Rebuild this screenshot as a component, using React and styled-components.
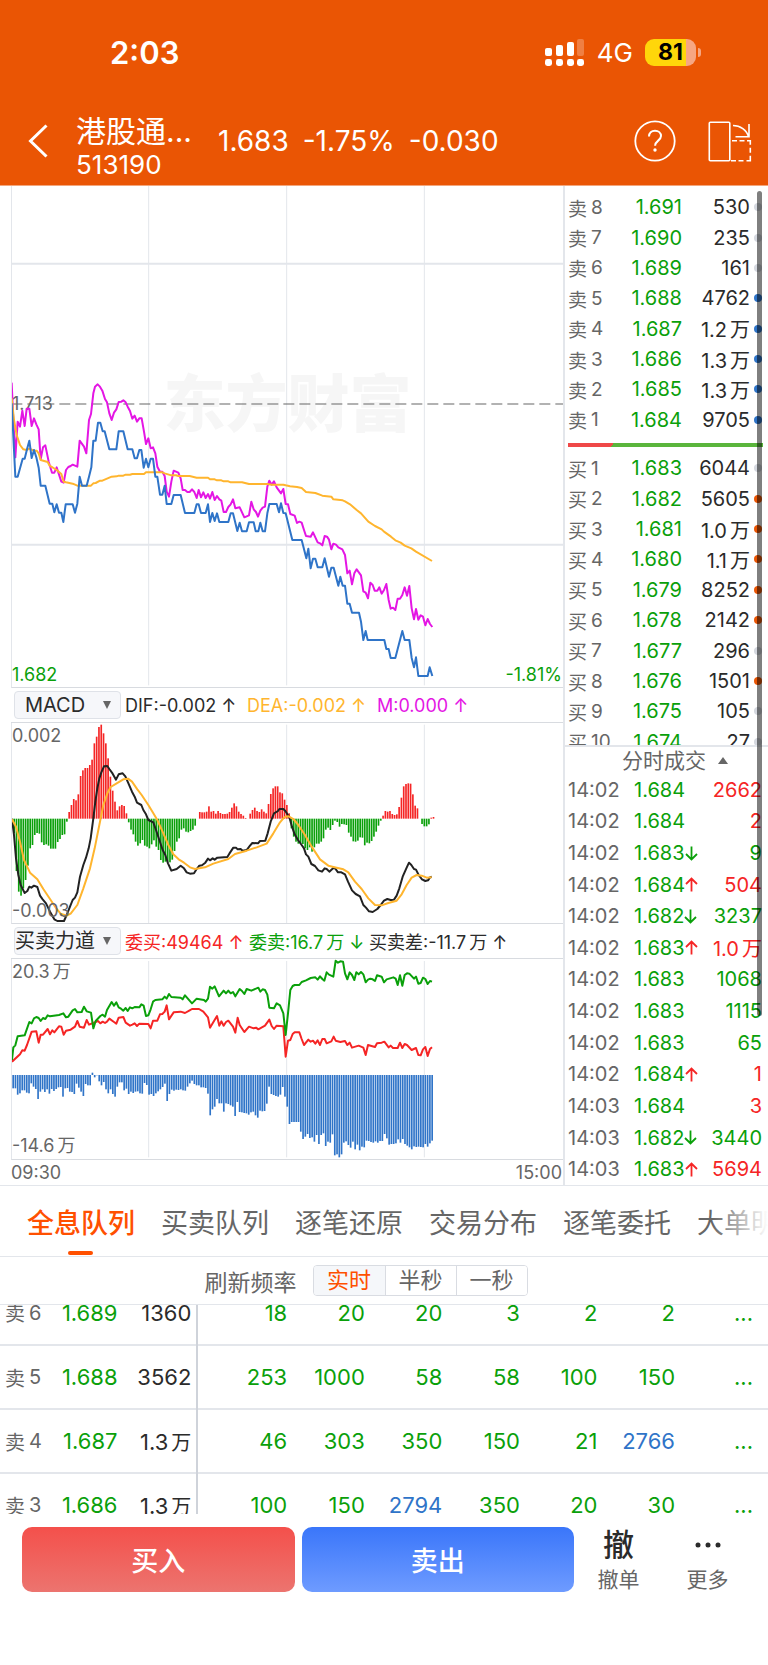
import React from "react";
import styled, { createGlobalStyle, css } from "styled-components";

const c = {
  brand: "#ea5504",
  accent: "#ff5000",
  up: "#f52525",
  down: "#0aa00a",
  blue: "#2f74c8",
  line: "#e3e6eb",
  text: "#2b2b2b",
  muted: "#666666",
  gold: "#ffb52e",
  pink: "#e416e4",
};

const Global = createGlobalStyle`
  * { box-sizing: border-box; }
  body { margin: 0; background: #fff; color: ${c.text};
    font-family: Inter, "Noto Sans CJK SC", sans-serif; }
  button, select { font: inherit; color: inherit; margin: 0; padding: 0; border: 0; background: none; cursor: pointer; }
`;

/* ---------- header ---------- */
const Header = styled.header`
  background: ${c.brand};
  color: #fff;
  height: 186px;
  border-bottom: 1px solid #f3a67c;
`;
const StatusBar = styled.div`
  display: flex;
  align-items: center;
  height: 103px;
  padding: 2px 67px 0 110px;
`;
const Clock = styled.span`
  flex: 1;
  font-size: 31px;
  font-weight: 600;
`;
const Network = styled.span`
  font-size: 26px;
  margin: 0 12px;
`;
const Battery = styled.span`
  display: flex;
  align-items: center;
  gap: 2px;
`;
const BatteryBody = styled.span`
  width: 51px;
  height: 27px;
  border-radius: 9px;
  background: linear-gradient(90deg, #ffd60a 81%, #f6a683 81%);
  color: #000;
  font-size: 23px;
  font-weight: 700;
  line-height: 27px;
  text-align: center;
`;
const BatteryTip = styled.span`
  width: 3px;
  height: 9px;
  border-radius: 0 3px 3px 0;
  background: #f6a683;
`;
const TitleBar = styled.div`
  display: flex;
  align-items: center;
  height: 76px;
  padding: 0 16px 0 28px;
`;
const IconButton = styled.button`
  display: flex;
  color: #fff;
`;
const TitleBlock = styled.h1`
  width: 142px;
  margin: 0 0 0 28px;
  padding-top: 12px;
  font-weight: 400;
`;
const FundName = styled.span`
  display: block;
  font-size: 30px;
  line-height: 36px;
`;
const FundCode = styled.span`
  display: block;
  font-size: 26px;
  line-height: 32px;
`;
const Quote = styled.div`
  flex: 1;
  display: flex;
  gap: 14px;
  font-size: 28px;
`;
const HeaderTools = styled.div`
  display: flex;
  align-items: center;
  gap: 32px;
`;

/* ---------- market area ---------- */
const Market = styled.main`
  display: grid;
  grid-template-columns: minmax(0, 1fr) 205px;
  border-bottom: 1px solid ${c.line};
`;
const Charts = styled.section`
  padding-left: 11px;
`;
const Panel = styled.div`
  position: relative;
  height: ${(p) => p.$height}px;
  border-left: 1px solid ${c.line};
  border-bottom: 1px solid #d8dbe0;
  overflow: hidden;
`;
const Plot = styled.svg`
  position: relative;
  display: block;
  width: 100%;
  height: 100%;
  path { vector-effect: non-scaling-stroke; fill: none; stroke-linejoin: round; }
`;
const AxisText = styled.span`
  position: absolute;
  left: 0;
  font-size: 18px;
  line-height: 20px;
  color: ${(p) => p.$color || c.muted};
  ${(p) => p.$right && css`left: auto; right: 1px;`}
  ${(p) => (p.$bottom !== undefined ? `bottom: ${p.$bottom}px;` : `top: ${p.$top}px;`)}
`;
const Watermark = styled.span`
  position: absolute;
  left: 0;
  right: 0;
  top: 174px;
  text-align: center;
  font-size: 62px;
  font-weight: 900;
  line-height: 90px;
  color: #f6f6f6;
`;
const Legend = styled.div`
  display: flex;
  align-items: center;
  height: 35px;
  border-bottom: 1px solid #d8dbe0;
  padding-left: 3px;
  font-size: 18px;
  white-space: nowrap;
`;
const SelectWrap = styled.span`
  position: relative;
  width: 107px;
  height: 28px;
  margin-right: 4px;
  svg { position: absolute; right: 9px; top: 9px; pointer-events: none; }
`;
const Select = styled.select`
  appearance: none;
  display: block;
  width: 107px;
  height: 28px;
  padding-right: 25px;
  border: 1px solid #dfe2e8;
  border-radius: 4px;
  background: #f6f7fa;
  font-size: 20px;
  line-height: 26px;
  text-align: center;
  text-align-last: center;
`;
const LegendItem = styled.span`
  color: ${(p) => p.$color};
  min-width: ${(p) => p.$min}px;
`;
const TimeAxis = styled.div`
  display: flex;
  justify-content: space-between;
  align-items: center;
  height: 25px;
  padding-right: 1px;
  font-size: 18px;
  color: ${c.muted};
`;

/* ---------- right column ---------- */
const Side = styled.aside`
  position: relative;
  display: flex;
  flex-direction: column;
  border-left: 2px solid ${c.line};
`;
const Book = styled.div`
  height: 561px;
  padding-top: 6px;
  overflow: hidden;
  border-bottom: 2px solid ${c.line};
`;
const Levels = styled.div`
  display: flex;
  flex-direction: column;
  height: ${(p) => p.$height}px;
`;
const Level = styled.div`
  flex: 1;
  display: grid;
  grid-template-columns: 50px 1fr 68px 12px;
  align-items: center;
  padding: 0 6px 0 3px;
  font-size: 20px;
  text-align: right;
`;
const SideLabel = styled.span`
  display: flex;
  align-items: center;
  gap: 4px;
  font-size: 19px;
  color: ${c.muted};
`;
const Price = styled.span`
  color: ${c.down};
`;
const Unit = styled.span`
  margin-left: 3px;
`;
const Dot = styled.i`
  justify-self: end;
  width: 8px;
  height: 8px;
  border-radius: 50%;
  background: ${(p) => p.$color};
`;
const Ratio = styled.div`
  height: 4px;
  margin: 8px 5px 6px 3px;
  background: linear-gradient(120deg, #ef4848 23%, #5ab53c 23%);
`;
const TicksToggle = styled.button`
  display: flex;
  align-items: center;
  justify-content: center;
  gap: 12px;
  height: 27px;
  padding-left: 17px;
  font-size: 21px;
  line-height: 27px;
  color: ${c.muted};
`;
const Ticks = styled.div`
  flex: 1;
  display: grid;
  grid-auto-rows: 1fr;
`;
const Tick = styled.div`
  display: grid;
  grid-template-columns: 66px auto 1fr;
  align-items: center;
  padding: 0 6px 0 3px;
  font-size: 20px;
`;
const TickTime = styled.span`
  color: ${c.muted};
`;
const TickPrice = styled.span`
  display: flex;
  align-items: center;
  color: ${c.down};
`;
const Volume = styled.span`
  text-align: right;
  color: ${(p) => (p.$up ? c.up : c.down)};
`;
const ScrollThumb = styled.div`
  position: absolute;
  right: 6px;
  top: 5px;
  width: 5px;
  height: 825px;
  border-radius: 3px;
  background: rgba(0, 0, 0, 0.5);
`;

/* ---------- tabs & refresh ---------- */
const Tabs = styled.nav`
  position: relative;
  display: flex;
  gap: 26px;
  height: 71px;
  padding-left: 27px;
  overflow: hidden;
  border-bottom: 1px solid ${c.line};
  &::after {
    content: "";
    position: absolute;
    right: 0;
    top: 0;
    bottom: 0;
    width: 56px;
    background: linear-gradient(90deg, rgba(255, 255, 255, 0), #fff);
  }
`;
const Tab = styled.button`
  position: relative;
  flex: none;
  font-size: 27px;
  color: ${(p) => (p.$active ? c.accent : c.muted)};
  font-weight: ${(p) => (p.$active ? 500 : 400)};
  ${(p) => p.$active && css`
    &::after {
      content: "";
      position: absolute;
      left: 41px;
      bottom: 1px;
      width: 25px;
      height: 4px;
      border-radius: 2px;
      background: ${c.accent};
    }
  `}
`;
const Refresh = styled.div`
  display: flex;
  align-items: center;
  justify-content: center;
  gap: 16px;
  height: 48px;
  padding-right: 36px;
  border-bottom: 1px solid ${c.line};
  font-size: 23px;
  color: ${c.muted};
`;
const Segments = styled.div`
  display: flex;
  height: 31px;
  border: 1px solid #d9dce2;
  border-radius: 4px;
  overflow: hidden;
`;
const Segment = styled.button`
  width: 71px;
  font-size: 22px;
  line-height: 29px;
  color: ${(p) => (p.$active ? c.accent : c.muted)};
  background: ${(p) => (p.$active ? "#f5f7fa" : "#fff")};
  & + & { border-left: 1px solid #d9dce2; }
`;

/* ---------- queue table ---------- */
const QueueView = styled.div`
  height: 209px;
  overflow: hidden;
`;
const Queue = styled.table`
  width: 100%;
  margin-top: -24px;
  table-layout: fixed;
  border-collapse: collapse;
  font-size: 22px;
  text-align: right;
`;
const QueueRow = styled.tr`
  height: 64px;
  border-bottom: 2px solid ${c.line};
`;
const Cell = styled.td`
  padding: 0;
  color: ${(p) => p.$color || c.down};
`;
const TotalCell = styled(Cell)`
  padding-right: 5px;
  border-right: 2px solid #cfd3da;
  ${Unit} { font-size: 20px; }
`;
const MoreCell = styled(Cell)`
  padding-right: 15px;
`;
const RowHead = styled.th`
  padding: 0 0 0 5px;
  font-weight: 400;
  ${SideLabel} { font-size: 20px; }
`;

/* ---------- actions ---------- */
const Actions = styled.footer`
  display: flex;
  align-items: stretch;
  height: 78px;
  margin-bottom: 73px;
  padding: 13px 16px 0 22px;
`;
const TradeButton = styled.button`
  flex: 1;
  border-radius: 10px;
  color: #fff;
  font-size: 27px;
  font-weight: 500;
  background: ${(p) => p.$bg};
  & + & { margin-left: 7px; }
`;
const ActionLink = styled.button`
  width: 89px;
  font-size: 21px;
  color: ${c.muted};
  display: flex;
  flex-direction: column;
  align-items: center;
  line-height: 24px;
`;
const ActionGlyph = styled.span`
  display: flex;
  align-items: center;
  height: 38px;
  margin-bottom: 5px;
  font-size: 31px;
  font-weight: 500;
  color: ${c.text};
`;

/* ---------- series data ---------- */
const priceAM = "35,100 46,320 53,320 68,266 74,266 81,238 88,212 95,264 102,240 109,262 116,293 122,347 136,347 149,401 157,401 163,427 170,403 177,428 184,428 190,456 197,403 218,403 225,428 232,401 239,320 246,347 260,347 267,320 274,292 280,212 287,212 294,158 301,158 308,184 314,184 328,238 349,238 356,184 370,184 383,238 397,238 404,265 411,265 418,240 424,240 431,293 438,266 445,292 452,266 459,266 466,320 472,320 480,374 487,374 494,347 500,402 514,402 521,375 542,375 555,429 583,429 590,403 596,403 603,429 617,429 624,403 630,456 637,429 644,453 651,430 658,456 685,456 692,430 699,430 712,483 719,458 726,484 740,484 747,457 761,457 767,484 775,484 781,458 788,484 795,484 802,430 808,402 830,402 837,427 843,400 850,429";
const pricePM = "47,430 67,510 95,510 109,565 115,536 122,595 129,566 136,566 143,592 157,592 164,565 177,620 184,593 191,593 205,647 211,620 218,647 225,647 232,701 239,701 246,728 267,728 273,755 280,810 287,783 293,810 343,810 349,837 356,837 362,864 376,864 397,783 404,810 418,810 425,864 432,892 438,862 445,918 473,918 479,892 487,918";
const refAM = "35,38 40,150 46,262 53,155 60,170 67,122 74,168 80,116 88,116 95,168 102,145 109,163 116,178 122,268 129,232 136,226 146,275 156,308 163,308 170,292 184,335 191,338 198,300 205,291 212,288 218,284 232,290 239,212 252,230 259,250 267,150 273,132 280,70 285,50 293,43 299,49 307,62 315,87 321,97 328,130 335,150 342,128 349,118 356,96 364,95 370,91 377,97 383,110 390,123 397,146 404,137 411,155 418,145 425,145 432,185 438,222 445,205 452,235 459,232 466,250 472,290 480,305 487,305 494,318 500,365 507,380 514,335 521,302 535,308 542,325 548,360 555,360 562,366 569,366 576,358 583,366 590,384 596,360 603,382 610,367 617,384 624,372 630,386 637,366 644,390 651,378 658,388 664,392 671,426 678,426 685,411 692,403 699,388 706,415 719,412 733,442 747,436 754,395 761,418 768,426 774,440 781,422 788,413 795,410 802,350 808,332 815,344 822,334 830,352 843,370 850,357 857,402";
const refPM = "54,403 61,432 74,437 81,459 88,455 95,458 102,480 108,498 122,500 129,487 143,517 150,520 157,526 164,498 171,500 177,509 184,538 190,521 198,524 205,532 217,538 225,555 232,610 239,602 246,643 253,610 260,598 273,616 280,664 287,668 294,685 301,638 308,645 314,662 322,662 328,652 335,671 342,660 349,642 356,690 362,716 369,713 376,720 383,686 390,686 397,675 404,652 411,677 418,648 425,715 432,748 438,717 445,749 452,736 459,740 466,766 473,747 480,762 487,771";
const avgAM = "35,85 42,150 50,195 60,225 70,238 80,240 88,236 102,242 110,242 116,250 122,270 143,276 149,287 170,300 184,312 191,335 198,337 218,341 232,347 273,347 280,340 287,339 300,332 307,332 335,320 350,319 356,317 370,317 377,314 390,314 397,312 432,312 438,307 487,307 494,310 514,316 528,316 535,318 569,318 590,323 624,323 630,328 644,328 651,331 664,331 671,334 685,334 692,337 726,337 747,342 802,342 815,344 850,344";
const avgPM = "47,346 60,349 81,351 95,354 108,366 136,369 157,377 184,380 190,388 218,391 225,394 240,403 260,420 273,430 295,455 315,468 335,478 342,485 363,500 376,511 392,518 404,527 424,535 438,545 486,573";
const difAM = "36,401 42,450 48,520 55,570 62,600 74,624 82,618 88,605 94,608 102,602 112,606 120,632 128,643 138,655 150,680 163,703 172,708 192,708 200,690 210,665 218,645 225,638 232,622 240,575 250,540 258,518 266,490 272,460 280,400 286,350 292,310 298,280 304,262 312,244 322,243 328,252 338,266 348,284 356,268 368,265 376,274 384,292 396,320 404,335 411,353 424,360 430,375 438,388 445,405 460,412 468,435 478,465 488,495 496,510 504,535 514,557 530,552 542,542 552,550 560,562 570,566 582,565 590,552 598,542 606,541 616,533 624,521 630,526 638,520 644,524 652,518 682,516 688,506 700,488 708,488 713,493 722,492 728,497 740,495 750,482 757,474 774,475 780,468 796,467 803,445 812,410 822,385 834,378 838,372 850,372 856,378";
const difPM = "58,397 66,425 74,448 84,465 95,480 102,490 108,508 115,515 124,537 135,543 145,556 156,560 164,550 170,552 178,560 190,549 196,551 204,562 214,562 225,568 234,590 246,616 257,627 270,634 280,660 288,668 297,679 308,681 322,672 332,660 342,647 352,642 362,645 372,644 380,632 388,610 398,575 410,548 417,533 424,540 432,552 438,554 446,570 456,583 466,588 474,586 480,577 485,575";
const deaAM = "36,403 48,425 60,470 72,525 90,563 112,583 130,612 150,642 170,672 182,686 200,692 212,686 232,660 250,610 270,550 284,490 298,420 310,360 322,325 332,306 350,295 370,283 384,281 396,290 412,313 425,330 445,360 460,385 472,405 490,445 505,480 520,508 536,523 552,533 570,547 585,552 615,547 640,536 685,522 705,507 740,497 770,487 800,476 820,445 840,412 850,400";
const deaPM = "46,395 56,394 70,402 85,420 105,450 125,485 150,523 175,542 200,548 220,553 235,562 255,590 275,612 295,640 315,660 335,661 355,654 380,647 395,628 410,600 425,578 440,570 455,572 470,578 485,577";
const sellAM = "36,420 40,382 46,376 53,349 74,346 88,306 95,310 102,295 109,291 116,294 122,303 129,294 136,297 143,286 150,289 177,285 190,280 198,292 205,290 218,271 225,267 232,277 245,276 252,260 260,274 273,278 280,325 287,303 301,288 308,284 315,290 321,270 335,246 342,257 349,247 356,262 363,266 370,272 377,264 383,273 390,262 397,265 404,261 418,262 424,253 431,257 438,288 445,286 452,268 459,245 466,240 487,238 494,230 500,236 507,222 514,231 542,233 548,238 555,226 576,250 590,236 612,240 617,245 624,236 630,200 637,206 644,199 657,229 671,212 678,220 685,212 692,220 699,216 706,229 719,207 726,213 733,222 740,207 754,212 775,203 781,215 788,208 795,210 802,224 808,263 822,265 830,250 840,256 850,280";
const sellPM = "47,345 54,280 61,210 68,198 74,195 88,195 95,186 108,181 122,174 136,172 143,179 150,169 157,177 163,182 170,157 177,164 190,170 197,122 204,128 211,124 219,125 225,160 232,178 239,157 246,165 253,180 259,157 266,163 273,156 280,163 287,187 294,179 301,176 308,178 315,183 321,166 335,170 342,187 350,178 370,172 377,176 383,195 390,166 397,197 404,165 411,160 418,161 432,176 438,170 445,191 452,189 459,173 466,177 473,192 480,183 486,185";
const buyAM = "36,425 60,403 67,391 74,392 81,375 95,335 109,334 116,368 122,344 129,344 143,327 150,343 157,331 163,337 177,319 184,320 191,344 198,332 212,329 225,320 232,303 239,320 252,323 260,300 267,314 287,306 294,303 301,310 308,305 315,309 321,305 328,296 342,306 349,311 356,293 370,291 377,308 390,317 397,314 404,310 411,318 418,311 445,312 452,325 459,302 472,302 480,283 487,282 494,275 500,256 507,298 521,277 542,275 555,279 569,271 576,267 597,267 610,275 624,292 630,323 651,288 658,317 664,304 671,317 678,306 685,302 699,320 706,338 713,293 719,315 733,336 747,320 761,325 768,323 775,328 795,317 808,299 815,318 822,327 830,317 850,319";
const buyPM = "47,410 54,362 61,360 68,342 74,337 88,337 95,357 102,375 115,359 122,365 129,362 136,371 143,361 150,375 157,357 164,357 170,370 184,364 191,350 197,362 211,366 225,363 232,375 239,368 246,383 266,377 280,383 287,405 294,375 315,381 321,370 335,368 343,365 356,382 362,377 369,384 383,384 390,368 397,384 404,372 411,375 425,390 438,384 445,405 452,406 459,388 466,381 473,408 480,387 486,382";

const macdBars = [
  445, 558, 620, 632, 610, 585, 542, 490, 480, 450, 444, 446, 472, 480, 478, 482, 491, 491, 491, 471,
  462, 450, 448, 410, 381, 360, 342, 346, 328, 273, 256, 249, 249, 240, 224, 175, 155, 126, 119, 145,
  175, 220, 275, 317, 350, 376, 364, 360, 363, 385, 412, 434, 448, 470, 482, 475, 465, 482, 485, 490,
  478, 466, 485, 495, 525, 533, 530, 530, 532, 524, 498, 470, 460, 434, 430, 440, 442, 438, 434, 422,
  401, 381, 382, 382, 380, 364, 380, 378, 386, 378, 384, 387, 387, 386, 381, 368, 355, 364, 380, 387,
  392, 399, 401, 386, 375, 368, 378, 381, 373, 380, 385, 357, 327, 310, 304, 304, 322, 325, 344, 360,
  385, 430, 455, 470, 476, 475, 477, 490, 495, 487, 500, 487, 476, 476, 470, 460, 434, 428, 435, 420,
  407, 411, 425, 417, 418, 420, 443, 455, 469, 470, 467, 457, 458, 481, 473, 475, 468, 455, 440, 422,
  407, 392, 378, 380, 378, 387, 390, 388, 366, 338, 304, 297, 295, 296, 328, 362, 370, 401, 417, 424,
  424, 418, 398, 396,
];
const gapBars = [
  505, 505, 524, 520, 511, 511, 518, 520, 490, 500, 507, 537, 515, 508, 516, 508, 521, 507, 513, 507,
  502, 501, 530, 505, 504, 515, 516, 522, 491, 503, 515, 528, 492, 496, 496, 458, 472, 466, 484, 496,
  486, 508, 520, 508, 522, 530, 500, 487, 487, 511, 506, 522, 515, 519, 515, 514, 520, 521, 489, 495,
  524, 522, 528, 520, 514, 508, 501, 491, 543, 522, 509, 512, 509, 510, 508, 511, 512, 500, 490, 482,
  492, 496, 496, 502, 502, 504, 521, 586, 568, 560, 537, 550, 550, 575, 550, 552, 556, 560, 588, 546,
  576, 577, 579, 580, 584, 577, 575, 586, 593, 572, 574, 573, 551, 500, 522, 525, 528, 530, 524, 501,
  530, 560, 612, 606, 606, 606, 606, 635, 657, 650, 642, 654, 652, 665, 645, 672, 645, 640, 678, 665,
  668, 643, 706, 703, 712, 703, 668, 664, 675, 683, 665, 688, 674, 691, 680, 682, 662, 663, 666, 668,
  664, 668, 663, 663, 642, 655, 674, 672, 672, 670, 658, 668, 657, 672, 677, 682, 688, 679, 681, 680,
  681, 682, 672, 680, 670, 662,
];

const PM_OFFSET = 810;
const points = (s, dx = 0) =>
  s.split(" ").map((p) => {
    const [x, y] = p.split(",").map(Number);
    return `${x + dx},${y}`;
  });
const session = (am, pm) => "M" + [...points(am), ...points(pm, PM_OFFSET)].join("L");

const Line = ({ am, pm, color, width = 2 }) => (
  <path d={session(am, pm)} stroke={color} strokeWidth={width} />
);

const Grid = ({ top, bottom }) => (
  <>
    {[446, 860, 1273].map((x) => (
      <path key={x} d={`M${x},${top}V${bottom}`} stroke={c.line} strokeWidth={1} />
    ))}
  </>
);

const Bars = ({ values, zero, first, last, colorOf }) => {
  const step = (last - first) / (values.length - 1);
  return values.map((v, i) =>
    v === zero ? null : (
      <rect
        key={i}
        x={first + i * step - 3}
        y={Math.min(v, zero)}
        width={5}
        height={Math.abs(v - zero)}
        fill={colorOf(v)}
      />
    )
  );
};

const Indicator = ({ label, options, children }) => (
  <Legend>
    <SelectWrap>
      <Select aria-label={label} defaultValue={options[0]}>
        {options.map((o) => (
          <option key={o}>{o}</option>
        ))}
      </Select>
      <svg width="10" height="10" viewBox="0 0 10 10">
        <path d="M1 1h8L5 9z" fill="#666" />
      </svg>
    </SelectWrap>
    {children}
  </Legend>
);

const Amount = ({ value }) =>
  value.endsWith("万") ? (
    <>
      {value.slice(0, -1)}
      <Unit>万</Unit>
    </>
  ) : (
    value
  );

const grey = "#d5d8df";
const asks = [
  ["8", "1.691", "530", grey],
  ["7", "1.690", "235", grey],
  ["6", "1.689", "161", grey],
  ["5", "1.688", "4762", c.blue],
  ["4", "1.687", "1.2万", c.blue],
  ["3", "1.686", "1.3万", c.blue],
  ["2", "1.685", "1.3万", c.blue],
  ["1", "1.684", "9705", c.blue],
];
const bids = [
  ["1", "1.683", "6044", grey],
  ["2", "1.682", "5605", c.brand],
  ["3", "1.681", "1.0万", c.brand],
  ["4", "1.680", "1.1万", c.brand],
  ["5", "1.679", "8252", c.brand],
  ["6", "1.678", "2142", c.brand],
  ["7", "1.677", "296", grey],
  ["8", "1.676", "1501", c.brand],
  ["9", "1.675", "105", grey],
  ["10", "1.674", "27", grey],
];
const ticks = [
  ["14:02", "1.684", "", "2662", true],
  ["14:02", "1.684", "", "2", true],
  ["14:02", "1.683", "down", "9", false],
  ["14:02", "1.684", "up", "504", true],
  ["14:02", "1.682", "down", "3237", false],
  ["14:02", "1.683", "up", "1.0万", true],
  ["14:02", "1.683", "", "1068", false],
  ["14:02", "1.683", "", "1115", false],
  ["14:02", "1.683", "", "65", false],
  ["14:02", "1.684", "up", "1", true],
  ["14:03", "1.684", "", "3", true],
  ["14:03", "1.682", "down", "3440", false],
  ["14:03", "1.683", "up", "5694", true],
];
const queue = [
  ["6", "1.689", "1360", ["18", "20", "20", "3", "2", "2"]],
  ["5", "1.688", "3562", ["253", "1000", "58", "58", "100", "150"]],
  ["4", "1.687", "1.3万", ["46", "303", "350", "150", "21", "2766"]],
  ["3", "1.686", "1.3万", ["100", "150", "2794", "350", "20", "30"]],
];

const Arrow = ({ dir }) => (
  <svg width="13" height="15" viewBox="0 0 13 15" fill="none" stroke={dir === "up" ? c.up : c.down} strokeWidth="1.8">
    <path d={dir === "up" ? "M6.5 14.500V1.500M1 7l5.500-5.500L12 7" : "M6.5 .5v13M1 8l5.500 5.500L12 8"} />
  </svg>
);

const BookSide = ({ name, rows, height }) => (
  <Levels $height={height}>
    {rows.map(([n, price, qty, dot]) => (
      <Level key={n}>
        <SideLabel>
          <span>{name}</span>
          <span>{n}</span>
        </SideLabel>
        <Price>{price}</Price>
        <span>
          <Amount value={qty} />
        </span>
        <Dot $color={dot} />
      </Level>
    ))}
  </Levels>
);

export default function App() {
  return (
    <>
      <Global />
      <Header>
        <StatusBar>
          <Clock>2:03</Clock>
          <svg width="40" height="28" viewBox="0 0 40 28" fill="#fff">
            <rect x="0" y="9" width="7" height="8" rx="2" />
            <rect x="11" y="6" width="7" height="11" rx="2" />
            <rect x="22" y="3" width="7" height="14" rx="2" />
            <rect x="32" y="0" width="7" height="17" rx="2" opacity="0.25" />
            {[0, 11, 22, 32].map((x) => (
              <rect key={x} x={x} y="20" width="7" height="7" rx="2.4" />
            ))}
          </svg>
          <Network>4G</Network>
          <Battery>
            <BatteryBody>81</BatteryBody>
            <BatteryTip />
          </Battery>
        </StatusBar>
        <TitleBar>
          <IconButton aria-label="返回">
            <svg width="20" height="34" viewBox="0 0 20 34" fill="none" stroke="#fff" strokeWidth="3">
              <path d="M18.500 1.500L2.500 17l16 15.500" />
            </svg>
          </IconButton>
          <TitleBlock>
            <FundName>港股通...</FundName>
            <FundCode>513190</FundCode>
          </TitleBlock>
          <Quote>
            <span>1.683</span>
            <span>-1.75%</span>
            <span>-0.030</span>
          </Quote>
          <HeaderTools>
            <IconButton aria-label="帮助">
              <svg width="42" height="42" viewBox="0 0 42 42" fill="none" stroke="#fff" strokeWidth="1.8">
                <circle cx="21" cy="21" r="19.700" />
                <path d="M15 16.500c0-3.600 2.600-5.800 6-5.800s6 2.200 6 5.300c0 4.600-5.900 4.700-5.900 9.800" strokeWidth="2" />
                <circle cx="21" cy="30" r="1.700" fill="#fff" stroke="none" />
              </svg>
            </IconButton>
            <IconButton aria-label="横屏">
              <svg width="44" height="41" viewBox="0 0 44 41" fill="none" stroke="#fff" strokeWidth="1.6">
                <rect x="1.300" y="1.300" width="20.500" height="38.400" rx="1" />
                <path d="M25 4.500c7 0 14 4.500 15.500 11.500M41 3v12.700H27.500" />
                <path d="M24 19.800h5m2.500 0h5m2.500 0h3.300v4m0 3v5m0 3v5H38.500m-3 0h-5m-2.500 0h-5" />
              </svg>
            </IconButton>
          </HeaderTools>
        </TitleBar>
      </Header>

      <Market>
        <Charts>
          <Panel $height={502}>
            <Watermark>东方财富</Watermark>
            <AxisText $top={208}>1.713</AxisText>
            <AxisText $bottom={2} $color={c.down}>1.682</AxisText>
            <AxisText $bottom={2} $right $color={c.down}>-1.81%</AxisText>
            <Plot viewBox="36 -552 1653 1503" preserveAspectRatio="none">
              <Grid top={-552} bottom={946} />
              <path d="M34,-319H1689M34,524H1689" stroke={c.line} strokeWidth="2" />
              <path d="M34,102H1689" stroke="#666" strokeWidth="1.2" strokeDasharray="11 5" />
              <Line am={refAM} pm={refPM} color={c.pink} />
              <Line am={avgAM} pm={avgPM} color={c.gold} />
              <Line am={priceAM} pm={pricePM} color={c.blue} />
            </Plot>
          </Panel>
          <Indicator label="指标一" options={["MACD", "KDJ"]}>
            <LegendItem $min={122} $color={c.text}>DIF:-0.002 ↑</LegendItem>
            <LegendItem $min={130} $color={c.gold}>DEA:-0.002 ↑</LegendItem>
            <LegendItem $color={c.pink}>M:0.000 ↑</LegendItem>
          </Indicator>
          <Panel $height={201}>
            <Plot viewBox="36 114 1653 600" preserveAspectRatio="none">
              <Grid top={119} bottom={716} />
              <Bars values={macdBars} zero={401} first={43} last={1301} colorOf={(v) => (v < 401 ? c.up : c.down)} />
              <Line am={difAM} pm={difPM} color="#222" />
              <Line am={deaAM} pm={deaPM} color={c.gold} />
            </Plot>
            <AxisText $top={3}>0.002</AxisText>
            <AxisText $bottom={2}>-0.003</AxisText>
          </Panel>
          <Indicator label="指标二" options={["买卖力道", "成交量"]}>
            <LegendItem $min={124} $color={c.up}>委买:49464 ↑</LegendItem>
            <LegendItem $min={120} $color={c.down}>委卖:16.7<Unit>万</Unit> ↓</LegendItem>
            <LegendItem $color={c.text}>买卖差:-11.7<Unit>万</Unit> ↑</LegendItem>
          </Indicator>
          <Panel $height={201}>
            <Plot viewBox="36 117 1653 600" preserveAspectRatio="none">
              <Grid top={123} bottom={712} />
              <Bars values={gapBars} zero={465} first={40} last={1297} colorOf={() => c.blue} />
              <Line am={buyAM} pm={buyPM} color={c.up} />
              <Line am={sellAM} pm={sellPM} color={c.down} />
            </Plot>
            <AxisText $top={3}>20.3<Unit>万</Unit></AxisText>
            <AxisText $bottom={3}>-14.6<Unit>万</Unit></AxisText>
          </Panel>
          <TimeAxis>
            <span>09:30</span>
            <span>15:00</span>
          </TimeAxis>
        </Charts>

        <Side>
          <Book>
            <BookSide name="卖" rows={asks} height={243} />
            <Ratio />
            <BookSide name="买" rows={bids} height={304} />
          </Book>
          <TicksToggle>
            分时成交
            <svg width="10" height="7" viewBox="0 0 10 7">
              <path d="M0 7L5 0l5 7z" fill="#666" />
            </svg>
          </TicksToggle>
          <Ticks>
            {ticks.map(([time, price, dir, vol, up], i) => (
              <Tick key={i}>
                <TickTime>{time}</TickTime>
                <TickPrice>
                  {price}
                  {dir && <Arrow dir={dir} />}
                </TickPrice>
                <Volume $up={up}>
                  <Amount value={vol} />
                </Volume>
              </Tick>
            ))}
          </Ticks>
          <ScrollThumb />
        </Side>
      </Market>

      <Tabs>
        {["全息队列", "买卖队列", "逐笔还原", "交易分布", "逐笔委托", "大单明细"].map((t, i) => (
          <Tab key={t} $active={i === 0}>
            {t}
          </Tab>
        ))}
      </Tabs>
      <Refresh>
        <span>刷新频率</span>
        <Segments>
          {["实时", "半秒", "一秒"].map((t, i) => (
            <Segment key={t} $active={i === 0}>
              {t}
            </Segment>
          ))}
        </Segments>
      </Refresh>

      <QueueView>
        <Queue>
          <colgroup>
            <col style={{ width: "6.6%" }} />
            <col style={{ width: "8.7%" }} />
            <col style={{ width: "10.4%" }} />
            <col style={{ width: "11.7%" }} />
            {[1, 2, 3, 4, 5].map((k) => (
              <col key={k} style={{ width: "10.1%" }} />
            ))}
            <col />
          </colgroup>
          <tbody>
            {queue.map(([n, price, total, cells]) => (
              <QueueRow key={n}>
                <RowHead scope="row">
                  <SideLabel>
                    <span>卖</span>
                    <span>{n}</span>
                  </SideLabel>
                </RowHead>
                <Cell>{price}</Cell>
                <TotalCell $color={c.text}>
                  <Amount value={total} />
                </TotalCell>
                {cells.map((v, i) => (
                  <Cell key={i} $color={Number(v) > 2000 ? c.blue : c.down}>
                    {v}
                  </Cell>
                ))}
                <MoreCell>...</MoreCell>
              </QueueRow>
            ))}
          </tbody>
        </Queue>
      </QueueView>

      <Actions>
        <TradeButton $bg="linear-gradient(#f4504b, #ec746f)">买入</TradeButton>
        <TradeButton $bg="linear-gradient(#3a76fa, #6e9bff)">卖出</TradeButton>
        <ActionLink>
          <ActionGlyph>撤</ActionGlyph>
          撤单
        </ActionLink>
        <ActionLink>
          <ActionGlyph>
            <svg width="26" height="6" viewBox="0 0 26 6" fill="#2b2b2b">
              <circle cx="3" cy="3" r="2.500" />
              <circle cx="13" cy="3" r="2.500" />
              <circle cx="23" cy="3" r="2.500" />
            </svg>
          </ActionGlyph>
          更多
        </ActionLink>
      </Actions>
    </>
  );
}
